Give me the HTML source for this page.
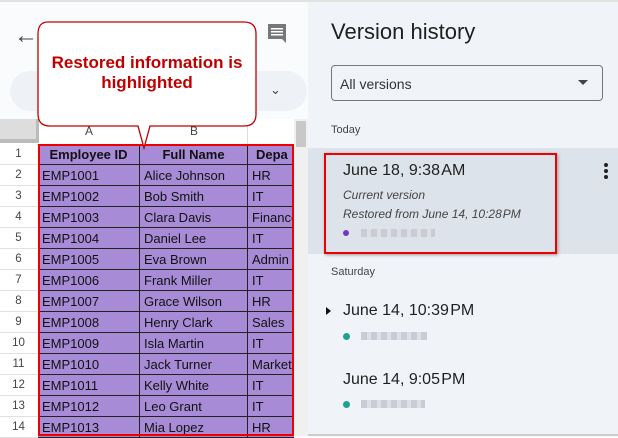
<!DOCTYPE html><html><head><style>
body{margin:0;width:618px;height:436px;overflow:hidden;font-family:"Liberation Sans",Arial,sans-serif;position:relative;background:#f9fbfd}
.a{position:absolute}
.row{position:absolute;left:0;width:294px;height:21px;font-size:13px}
.rn{position:absolute;left:0;width:37px;text-align:center;color:#444;line-height:21px;font-size:11.5px;border-bottom:1px solid #e0e0e0;height:20px;background:#fff}
.c{position:absolute;top:0;height:20px;line-height:21px;background:#a78bd6;border-bottom:1px solid #222;border-right:1px solid #222;padding-left:4px;color:#111;white-space:nowrap;overflow:hidden;box-sizing:border-box;height:21px}
.ca{left:38px;width:102px}.cb{left:140px;width:108px}.cc{left:248px;width:46px;border-right:none}
.rp{font-family:"Liberation Sans",Arial,sans-serif;color:#1f1f1f}
.blur{display:inline-block;height:8px;background:repeating-linear-gradient(90deg,#c9ccd4 0 6px,#dcdfe5 6px 10px)}
</style></head><body>
<div class="a" style="left:0;top:0;width:618px;height:2px;background:#e0e3e0"></div>
<div class="a" style="left:0;top:2px;width:308px;height:434px;background:#f9fbfd"></div>
<div class="a" style="left:14px;top:22px;font-size:24px;color:#444">&#8592;</div>
<svg class="a" style="left:266px;top:22px" width="22" height="22"><rect x="2" y="2" width="18" height="15" fill="#777"/><polygon points="16,17 20,17 20,21" fill="#777"/><rect x="5" y="6" width="12" height="1.5" fill="#fff"/><rect x="5" y="9" width="12" height="1.5" fill="#fff"/><rect x="5" y="12" width="12" height="1.5" fill="#fff"/></svg>
<div class="a" style="left:10px;top:71px;width:297px;height:40px;border-radius:20px;background:#eef2f7"></div>
<div class="a" style="left:270px;top:82px;font-size:13px;color:#444">&#8964;</div>
<div class="a" style="left:0;top:119px;width:294px;height:25px;background:#fff;border-bottom:1px solid #ccc"></div>
<div class="a" style="left:0;top:119px;width:36px;height:20px;background:#ddd;border-right:3px solid #bbb;border-bottom:4px solid #bbb"></div>
<div class="a" style="left:38px;top:124px;width:102px;text-align:center;font-size:12px;color:#444">A</div>
<div class="a" style="left:140px;top:124px;width:108px;text-align:center;font-size:12px;color:#444">B</div>
<div class="a" style="left:247px;top:119px;width:1px;height:25px;background:#ddd"></div>
<div class="a" style="left:294px;top:119px;width:14px;height:317px;background:#f0f0f0"></div>
<div class="a" style="left:296px;top:121px;width:10px;height:26px;background:#c8c8c8"></div>
<div id="g"></div>
<div class="a" style="left:38px;top:144px;width:252px;height:288px;border:2px solid #e00"></div>
<svg class="a" style="left:34px;top:20px" width="226" height="135">
<path d="M14,2 H210 Q222,2 222,14 V94 Q222,106 210,106 H116 L110,128 L104,106 H16 Q4,106 4,94 V14 Q4,2 14,2 Z" fill="#fff" stroke="#c00000" stroke-width="1.3"/></svg>
<div class="a" style="left:36px;top:53px;width:222px;text-align:center;font-weight:bold;color:#c00000;font-size:17px;line-height:20px">Restored information is<br>highlighted</div>
<div class="a" style="left:308px;top:2px;width:310px;height:434px;background:#f0f4f9"></div>
<div class="a rp" style="left:331px;top:19px;font-size:22px">Version history</div>
<div class="a rp" style="left:331px;top:65px;width:272px;height:36px;border:1px solid #747775;border-radius:4px;box-sizing:border-box"><span class="a" style="left:8px;top:10px;font-size:14px;color:#333">All versions</span><span class="a" style="left:246px;top:14px;width:0;height:0;border:5px solid transparent;border-top-color:#444;border-bottom:0"></span></div>
<div class="a rp" style="left:331px;top:124px;font-size:11px;color:#444">Today</div>
<div class="a" style="left:308px;top:148px;width:310px;height:106px;background:#dde3ea"></div>
<div class="a" style="left:324px;top:153px;width:229px;height:97px;border:2px solid #e00;box-shadow:1px 1px 3px #999"></div>
<div class="a rp" style="left:343px;top:162px;font-size:16px">June 18, 9:38&#8202;AM</div>
<div class="a" style="left:604px;top:163px;width:4px;height:4px;border-radius:2px;background:#222;box-shadow:0 6px 0 #222,0 12px 0 #222"></div>
<div class="a rp" style="left:343px;top:188px;font-size:12px;font-style:italic;color:#444">Current version</div>
<div class="a rp" style="left:343px;top:207px;font-size:12px;font-style:italic;color:#444">Restored from June 14, 10:28&#8202;PM</div>
<div class="a" style="left:343px;top:230px;width:6px;height:6px;border-radius:3px;background:#6c3ac8"></div>
<div class="a blur" style="left:361px;top:229px;width:74px"></div>
<div class="a rp" style="left:331px;top:266px;font-size:11px;color:#444">Saturday</div>
<div class="a" style="left:326px;top:307px;width:0;height:0;border:4px solid transparent;border-left:5px solid #111"></div>
<div class="a rp" style="left:343px;top:302px;font-size:16px">June 14, 10:39&#8202;PM</div>
<div class="a" style="left:343px;top:333px;width:7px;height:7px;border-radius:4px;background:#20a090"></div>
<div class="a blur" style="left:361px;top:332px;width:66px"></div>
<div class="a rp" style="left:343px;top:371px;font-size:16px">June 14, 9:05&#8202;PM</div>
<div class="a" style="left:343px;top:401px;width:7px;height:7px;border-radius:4px;background:#20a090"></div>
<div class="a blur" style="left:361px;top:400px;width:64px"></div>
<div class="a" style="left:308px;top:434px;width:310px;height:2px;background:#ccc"></div>
<script>
var d=[["Employee ID","Full Name","Depa"],["EMP1001","Alice Johnson","HR"],["EMP1002","Bob Smith","IT"],["EMP1003","Clara Davis","Finance"],["EMP1004","Daniel Lee","IT"],["EMP1005","Eva Brown","Admin"],["EMP1006","Frank Miller","IT"],["EMP1007","Grace Wilson","HR"],["EMP1008","Henry Clark","Sales"],["EMP1009","Isla Martin","IT"],["EMP1010","Jack Turner","Marketing"],["EMP1011","Kelly White","IT"],["EMP1012","Leo Grant","IT"],["EMP1013","Mia Lopez","HR"]];
var h="";for(var i=0;i<d.length;i++){var t=144+i*21;var b=i==0?"font-weight:bold;text-align:center;padding-left:0;":"";
h+='<div class="row" style="top:'+t+'px"><div class="rn">'+(i+1)+'</div><div class="c ca" style="'+b+'">'+d[i][0]+'</div><div class="c cb" style="'+b+'">'+d[i][1]+'</div><div class="c cc" style="'+(i==0?"font-weight:bold;padding-left:8px":"")+'">'+d[i][2]+'</div></div>';}
document.getElementById("g").innerHTML=h;
</script>
</body></html>
